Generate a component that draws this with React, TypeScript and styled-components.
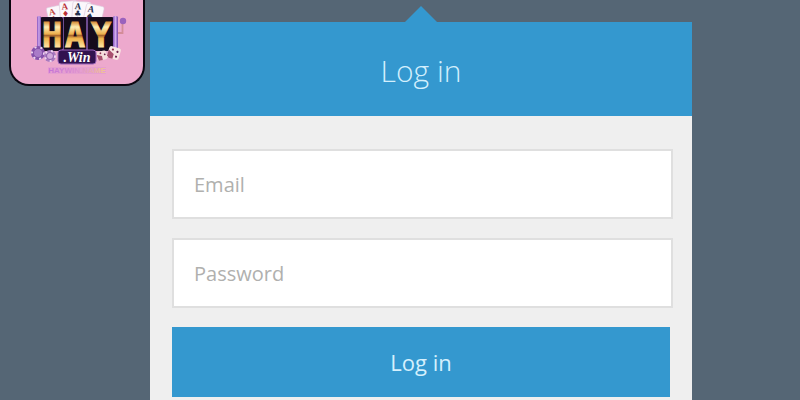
import React, { useState } from 'react';
import styled, { createGlobalStyle } from 'styled-components';

const GlobalStyle = createGlobalStyle`
  * {
    box-sizing: border-box;
  }
  body {
    margin: 0;
    background-color: #556675;
    font-family: 'Open Sans', sans-serif;
  }
`;

const Page = styled.main`
  display: flex;
  min-height: 100vh;
  padding: 22px 108px 0 150px;
`;

const Brand = styled.a`
  position: absolute;
  top: 0;
  left: 9px;
  width: 136px;
  height: 86px;
  overflow: hidden;
  background-color: #eda9cd;
  border: 2px solid #0b0610;
  border-top: none;
  border-radius: 0 0 20px 20px;
  svg {
    display: block;
  }
`;

const Card = styled.section`
  display: flex;
  flex-direction: column;
  flex: 1;
  background-color: #efefef;
`;

const Header = styled.header`
  position: relative;
  display: flex;
  align-items: center;
  justify-content: center;
  height: 94px;
  padding-top: 4px;
  background-color: #3498cf;
  &::before {
    content: '';
    position: absolute;
    bottom: 100%;
    left: 50%;
    border: 16px solid transparent;
    border-top: none;
    border-bottom-color: #3498cf;
    transform: translateX(-50%);
  }
`;

const Title = styled.h1`
  margin: 0;
  color: #d2effd;
  font-size: 30px;
  font-weight: 300;
  line-height: 40px;
`;

const Form = styled.form`
  display: flex;
  flex-direction: column;
  gap: 19px;
  padding: 33px 19px 2px 22px;
`;

const Input = styled.input`
  width: 100%;
  height: 70px;
  padding: 0 20px;
  background-color: white;
  border: 2px solid #dfdfdf;
  border-radius: 0;
  outline: none;
  color: #555555;
  font-family: inherit;
  font-size: 20px;
  &::placeholder {
    color: #b0b0ae;
    opacity: 1;
  }
`;

const Button = styled.button`
  height: 70px;
  margin-right: 3px;
  padding: 0;
  background-color: #3498cf;
  border: none;
  color: #d5f0fd;
  font-family: inherit;
  font-size: 22px;
  cursor: pointer;
`;

const cards = [
  { x: 46, y: 8, angle: -12, suit: '♦', color: '#c2473e' },
  { x: 59, y: 2, angle: -5, suit: '♦', color: '#b93036' },
  { x: 73, y: 1, angle: 4, suit: '♣', color: '#25304e' },
  { x: 87, y: 3, angle: 13, suit: '♠', color: '#25304e' },
];

const reels = [
  { x: 41, center: 52, letter: 'H' },
  { x: 64, center: 75, letter: 'A' },
  { x: 90, center: 101, letter: 'Y' },
];

const chips = [
  { x: 38, y: 53, r: 7, rim: '#8552ac', face: '#a97bc8' },
  { x: 50, y: 56, r: 6, rim: '#a87abf', face: '#d0a8da' },
];

const Logo = () => (
  <svg width="132" height="84" viewBox="11 0 132 84" aria-hidden="true">
    <defs>
      <linearGradient id="gold" gradientUnits="userSpaceOnUse" x1="0" y1="22" x2="0" y2="47">
        <stop offset="0" stopColor="#d9913c" />
        <stop offset="0.2" stopColor="#fff0b4" />
        <stop offset="0.48" stopColor="#ecae4b" />
        <stop offset="0.54" stopColor="#a8672e" />
        <stop offset="0.66" stopColor="#efb44c" />
        <stop offset="1" stopColor="#ffe3a0" />
      </linearGradient>
      <linearGradient id="frame" x1="0" y1="0" x2="1" y2="0">
        <stop offset="0" stopColor="#8554bd" />
        <stop offset="0.5" stopColor="#d0abed" />
        <stop offset="1" stopColor="#7444ab" />
      </linearGradient>
      <linearGradient id="name" x1="0" y1="0" x2="1" y2="0">
        <stop offset="0" stopColor="#c373d6" />
        <stop offset="0.5" stopColor="#dc8fd0" />
        <stop offset="1" stopColor="#f3c98b" />
      </linearGradient>
    </defs>
    {cards.map(({ x, y, angle, suit, color }) => (
      <g key={x} transform={`translate(${x} ${y}) rotate(${angle})`}>
        <rect width="18" height="24" rx="2" fill="#fbf7fb" stroke="#dcc7dc" strokeWidth="0.6" />
        <text x="2" y="8" fontFamily="Liberation Serif, serif" fontSize="9" fontWeight="700" fill={color}>
          A
        </text>
        <text x="2" y="15" fontFamily="DejaVu Sans, sans-serif" fontSize="8" fill={color}>
          {suit}
        </text>
      </g>
    ))}
    <rect x="40" y="17" width="74" height="34" rx="2" fill="#1b0d24" />
    <rect x="37" y="16" width="4" height="34" rx="1.5" fill="url(#frame)" />
    <rect x="113" y="16" width="5" height="34" rx="1.5" fill="url(#frame)" />
    <path d="M118 33h4.500v-11" fill="none" stroke="#d38c98" strokeWidth="1.8" />
    <circle cx="123" cy="21" r="3.2" fill="#9a62bd" />
    <path d="M63 17v33M87 17v33" stroke="#8b61b4" strokeWidth="1.5" />
    {reels.map(({ x, center, letter }) => (
      <g key={letter}>
        <rect x={x} y="18" width="22" height="31" rx="1" fill="#150b1b" />
        <text
          x={center}
          y="47"
          textAnchor="middle"
          fontFamily="DejaVu Sans Mono, monospace"
          fontSize="34"
          fontWeight="700"
          fill="url(#gold)"
          stroke="url(#gold)"
          strokeWidth="0.8"
        >
          {letter}
        </text>
      </g>
    ))}
    {chips.map(({ x, y, r, rim, face }) => (
      <g key={x}>
        <circle cx={x} cy={y} r={r} fill={rim} />
        <circle cx={x} cy={y} r={r - 1} fill="none" stroke="#ecd2ee" strokeWidth="2" strokeDasharray="2 4" />
        <circle cx={x} cy={y} r={r - 2.5} fill={face} stroke="#7b4ba0" strokeWidth="0.7" />
      </g>
    ))}
    <g transform="rotate(16 114 53)">
      <rect x="108" y="47" width="12" height="12" rx="2.5" fill="#f8e4e2" />
      <path d="M108 51l6 3v5h-4l-2-2z" fill="#a9516f" />
      <circle cx="112" cy="50" r="1.1" fill="#8b304f" />
      <circle cx="117" cy="51" r="1.1" fill="#6e244f" />
      <circle cx="117" cy="56" r="1.1" fill="#6e244f" />
    </g>
    <g transform="rotate(-12 102 56)">
      <rect x="97" y="51" width="10" height="9" rx="2" fill="#f6dfdc" />
      <path d="M97 54l5 2v4h-4z" fill="#a9516f" />
      <circle cx="101" cy="53" r="0.9" fill="#8b304f" />
      <circle cx="105" cy="55" r="0.9" fill="#6e244f" />
    </g>
    <rect x="58" y="50" width="38" height="14" rx="3" fill="#32124f" stroke="#9863ba" />
    <text
      x="77"
      y="62"
      textAnchor="middle"
      fontFamily="Liberation Serif, serif"
      fontSize="14"
      fontStyle="italic"
      fontWeight="700"
      fill="#ffffff"
    >
      .Win
    </text>
    <rect x="48" y="67" width="58" height="7" fill="#d78bd6" opacity="0.35" />
    <text x="77" y="73" textAnchor="middle" fontFamily="Liberation Sans, sans-serif" fontSize="8" fontWeight="700" fill="url(#name)">
      HAYWIN.NAME
    </text>
  </svg>
);

const App = () => {
  const [email, setEmail] = useState('');
  const [password, setPassword] = useState('');

  return (
    <>
      <GlobalStyle />
      <Page>
        <Brand href="#" aria-label="Hay.Win">
          <Logo />
        </Brand>
        <Card>
          <Header>
            <Title>Log in</Title>
          </Header>
          <Form onSubmit={(event) => event.preventDefault()}>
            <Input
              type="email"
              aria-label="Email"
              placeholder="Email"
              value={email}
              onChange={(event) => setEmail(event.target.value)}
            />
            <Input
              type="password"
              aria-label="Password"
              placeholder="Password"
              value={password}
              onChange={(event) => setPassword(event.target.value)}
            />
            <Button type="submit">Log in</Button>
          </Form>
        </Card>
      </Page>
    </>
  );
};

export default App;
